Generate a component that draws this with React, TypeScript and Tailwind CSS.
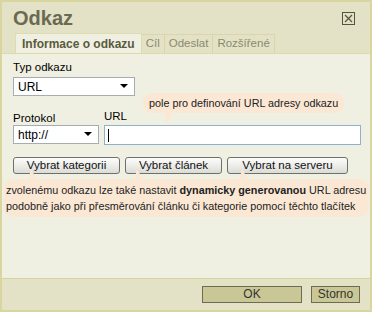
import React from "react";

const font = { fontFamily: '"Liberation Sans", Arial, sans-serif' };

function Arrow() {
  return (
    <svg width="8" height="5" viewBox="0 0 8 5" className="shrink-0">
      <polygon points="0,0 8,0 4,4" fill="#000" />
    </svg>
  );
}

function Select({ value, width }: { value: string; width: string }) {
  return (
    <div
      className={`${width} h-[19px] flex items-center justify-between bg-white border border-[#a5acb2] pl-[4px] pr-[6px] text-[12px] text-black`}
    >
      <span>{value}</span>
      <Arrow />
    </div>
  );
}

function Btn({ label, width }: { label: string; width: string }) {
  return (
    <button
      className={`${width} h-[17px] rounded-[3px] border border-[#6f6f6f] bg-gradient-to-b from-[#fdfdfd] to-[#dcdcd6] text-[11.5px] leading-[15px] text-[#111]`}
    >
      {label}
    </button>
  );
}

export default function App() {
  const tabs = ["Cíl", "Odeslat", "Rozšířené"];

  return (
    <div className="w-[372px] h-[312px] bg-[#d8d59f] p-[2px] flex flex-col" style={font}>
      {/* Header */}
      <div className="bg-[#e3e2c7] h-[51px] flex flex-col">
        <div className="flex items-center justify-between pl-[11px] pr-[15px] h-[30px]">
          <h1 className="text-[20px] font-bold text-[#6a6a52] leading-none pt-[2px]">Odkaz</h1>
          <svg width="13" height="13" viewBox="0 0 13 13" className="mt-[2px]">
            <rect x="0.5" y="0.5" width="12" height="12" fill="none" stroke="#55553f" />
            <path d="M3 3 L10 10 M10 3 L3 10" stroke="#55553f" strokeWidth="1.2" />
          </svg>
        </div>
        <div className="flex items-end pl-[13px] mt-auto">
          <div className="h-[20px] px-[6px] flex items-center bg-[#f0f0e2] border border-b-0 border-[#dddbb0] text-[12px] font-bold text-[#5a5a3e]">
            Informace o odkazu
          </div>
          {tabs.map((t) => (
            <div
              key={t}
              className="h-[19px] px-[4px] flex items-center border border-b-0 border-l-0 border-[#d9d6a8] text-[11.5px] text-[#8a8a6c]"
            >
              {t}
            </div>
          ))}
        </div>
      </div>

      {/* Body */}
      <div className="relative flex-1 bg-[#f0f0e2] border-t border-[#dcdaa8] pl-[11px] pr-[9px] pt-[6px] text-[11.5px] text-black">
        <div className="leading-[14px]">Typ odkazu</div>
        <div className="mt-[3px]">
          <Select value="URL" width="w-[122px]" />
        </div>

        <div className="flex gap-[5px] mt-[13px]">
          <div className="flex flex-col">
            <div className="leading-[14px] pt-[2px]">Protokol</div>
            <Select value="http://" width="w-[86px]" />
          </div>
          <div className="flex flex-col flex-1">
            <div className="leading-[14px]">URL</div>
            <div className="h-[20px] mt-[2px] bg-white border border-[#8fb0d0] flex items-center pl-[3px]">
              <div className="w-px h-[13px] bg-black" />
            </div>
          </div>
        </div>

        {/* URL tooltip */}
        <div className="absolute left-[141px] top-[39px] h-[20px] rounded-[9px] bg-[#fbe8d4] px-[6px] flex items-center text-[10.8px] text-[#222] whitespace-nowrap">
          pole pro definování URL adresy odkazu
          <svg width="14" height="14" viewBox="0 0 14 14" className="absolute left-[18px] top-[18px]">
            <polygon points="2,0 12,0 6,13" fill="#fbe8d4" />
          </svg>
        </div>

        <div className="flex gap-[5px] mt-[12px]">
          <Btn label="Vybrat kategorii" width="w-[107px]" />
          <Btn label="Vybrat článek" width="w-[97px]" />
          <Btn label="Vybrat na serveru" width="w-[121px]" />
        </div>

        {/* Buttons tooltip */}
        <div className="relative -ml-[9px] -mr-[8px] mt-[5px] rounded-[9px] bg-[#fbe8d4] px-[2px] py-[3px] text-[10.8px] leading-[16px] text-[#222] whitespace-nowrap">
          <svg width="14" height="12" viewBox="0 0 14 12" className="absolute left-[22px] -top-[10px]">
            <polygon points="5,0 2,12 12,12" fill="#fbe8d4" />
          </svg>
          <svg width="14" height="12" viewBox="0 0 14 12" className="absolute left-[128px] -top-[10px]">
            <polygon points="5,0 2,12 12,12" fill="#fbe8d4" />
          </svg>
          <svg width="14" height="12" viewBox="0 0 14 12" className="absolute left-[233px] -top-[10px]">
            <polygon points="5,0 2,12 12,12" fill="#fbe8d4" />
          </svg>
          <div>
            zvolenému odkazu lze také nastavit <b>dynamicky generovanou</b> URL adresu
          </div>
          <div>podobně jako při přesměrování článku či kategorie pomocí těchto tlačítek</div>
        </div>
      </div>

      {/* Footer */}
      <div className="h-[32px] bg-[#e3e2c7] border-t border-[#d6d39d] flex items-center justify-end gap-[9px] pr-[10px] pb-[1px]">
        <button className="w-[100px] h-[17px] bg-[#c9c795] border border-[#6c6c54] text-[12px] leading-[15px] text-[#333]">
          OK
        </button>
        <button className="w-[49px] h-[17px] bg-[#c9c795] border border-[#6c6c54] text-[12px] leading-[15px] text-[#333]">
          Storno
        </button>
      </div>
    </div>
  );
}
